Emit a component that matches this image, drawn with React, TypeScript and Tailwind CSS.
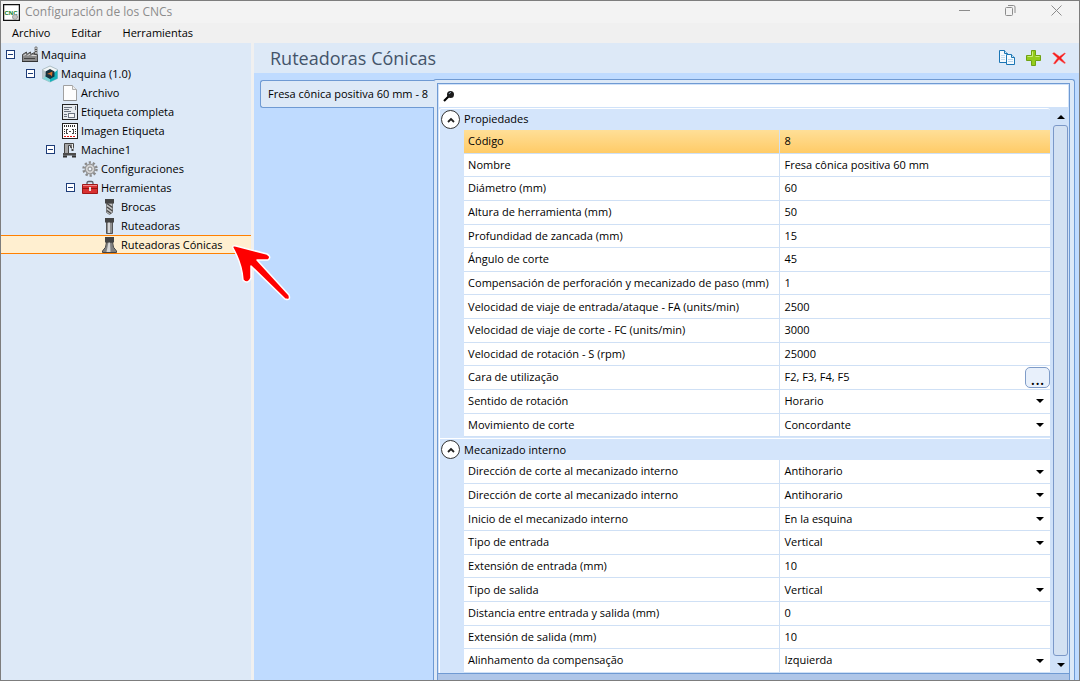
import { useState } from "react";
import type { ReactNode } from "react";

/* ================= TYPES ================= */
interface Field {
  id: string;
  label: string;
  value: string;
  kind?: "text" | "select" | "browse";
}

interface TreeNode {
  id: number;
  name: string;
  icon: ReactNode;
  indent: string;
  expandable?: boolean;
}

/* ================= TREE ICONS ================= */
const FactoryIcon = () => (
  <svg width="18" height="18" viewBox="0 0 18 18">
    <path d="M14 1h2v7h-2z" fill="#e8e8e8" stroke="#666" strokeWidth="0.8" />
    <path d="M14 3.500h2M14 5.500h2" stroke="#555" />
    <path d="M1.500 15.500V8.500L5.500 6v2.500L9.500 6v2.500L13.500 6.500v2h3v7z" fill="#8a8a8a" stroke="#4a4a4a" />
    <path d="M2.500 9.500l3-1.500M6.500 9.500l3-1.500M10.500 9.500h5" stroke="#d8d8d8" />
    <path d="M3 12.500h11" stroke="#444" />
    <path d="M1 15.500h16" stroke="#333" />
  </svg>
);

const CubeIcon = () => (
  <svg width="18" height="18" viewBox="0 0 18 18">
    <path d="M9 1l7.500 3.500v9L9 17l-7.500-3.500v-9z" fill="#f2f6f7" stroke="#9fb4ba" strokeWidth="0.8" />
    <path d="M9 17v-6l7.500-6v8.500z" fill="#16b3bb" />
    <path d="M1.500 13.500L9 17v-4l-5-3z" fill="#7fd6d9" />
    <path d="M1.500 4.500L4 6v6l-2.500 1.500z" fill="#b9c6ca" />
    <path d="M9 4l4.500 2.500v5L9 14l-4.500-2.500v-5z" fill="#17333f" />
    <path d="M6 9l5.500-2.500-.5 5-2-2z" fill="#d9702f" />
  </svg>
);

const FileIcon = () => (
  <svg width="18" height="18" viewBox="0 0 18 18">
    <path d="M2.500 1.500h9l4 4v11h-13z" fill="#fdfdfd" stroke="#a0a0a0" />
    <path d="M11.500 1.500v4h4" fill="#eee" stroke="#b0b0b0" />
    <path d="M2.500 16.500h13" stroke="#8a8a8a" />
  </svg>
);

const LabelIcon = () => (
  <svg width="18" height="18" viewBox="0 0 18 18">
    <rect x="1.500" y="1.500" width="15" height="15" fill="#e6eaee" stroke="#222" />
    <path d="M3 4.500h8M3 6.500h5M3 8.500h7M3 11.500h3M3 13.500h3M14.500 3v4" stroke="#6c7480" />
    <rect x="7.500" y="10.500" width="6" height="4" fill="#f8f8f8" stroke="#6c7480" />
  </svg>
);

const ImageLabelIcon = () => (
  <svg width="18" height="18" viewBox="0 0 18 18">
    <rect x="1.500" y="1.500" width="15" height="15" fill="#fff" stroke="#222" />
    <path d="M3 4h12" stroke="#333" strokeWidth="2" strokeDasharray="1 1" />
    <path d="M3.500 7v5M14.500 7v5" stroke="#333" strokeDasharray="1 1" />
    <path d="M5 7.500h2M11 7.500h2M5 11.500h2M11 11.500h2M5.500 8v3M12.500 8v3M8 9.500h2" stroke="#444" />
    <path d="M3 14.500h12" stroke="#e01818" strokeDasharray="2 1" />
  </svg>
);

const MachineIcon = () => (
  <svg width="18" height="18" viewBox="0 0 18 18">
    <path d="M3.500 13V2.500h9v4h-3v-2h-2V13z" fill="#a5a5a5" stroke="#444" />
    <path d="M11.500 4v6" stroke="#444" strokeWidth="2" />
    <path d="M11.500 3v5" stroke="#eee" />
    <path d="M2 12h13v2.500H2z" fill="#4c4c4c" />
    <path d="M2 15.500h4M11 15.500h4" stroke="#333" strokeWidth="2" />
  </svg>
);

const GearIcon = () => (
  <svg width="18" height="18" viewBox="0 0 18 18">
    <circle cx="9" cy="9" r="6.500" fill="none" stroke="#8a8a8a" strokeWidth="2.500" strokeDasharray="2.200 1.880" />
    <circle cx="9" cy="9" r="4.800" fill="#d4d4d4" stroke="#949494" strokeWidth="1.200" />
    <circle cx="9" cy="9" r="2" fill="#eef3fa" stroke="#8a8a8a" />
  </svg>
);

const ToolboxIcon = () => (
  <svg width="18" height="18" viewBox="0 0 18 18">
    <path d="M6 5V4Q6 2.500 7.500 2.500h3q1.500 0 1.500 1.500v1" fill="none" stroke="#5c6068" strokeWidth="1.300" />
    <path d="M1.500 5.500h15v9h-15z" fill="#d83030" stroke="#a01818" />
    <path d="M2 6.500h14" stroke="#f08a8a" />
    <path d="M1 9.500h16" stroke="#941414" />
    <path d="M8 8h2v4H8z" fill="#e4e4e4" />
  </svg>
);

const DrillIcon = () => (
  <svg width="18" height="18" viewBox="0 0 18 18">
    <path d="M5.500 5h6v9.500l-3 2-3-2z" fill="#c4c4c4" stroke="#666" strokeWidth="0.800" />
    <path d="M6 5.500l5.500 4M6 9l5.500 4M6 12.500l4 3" stroke="#444" strokeWidth="1.300" />
    <path d="M4 1h9v4.500H4z" fill="#444" />
  </svg>
);

const RouterIcon = () => (
  <svg width="18" height="18" viewBox="0 0 18 18">
    <path d="M5.500 5h6v11.500h-6z" fill="#8f8f8f" stroke="#555" />
    <path d="M8 5v11" stroke="#d8d8d8" strokeWidth="2" />
    <path d="M4 1h9v4.500H4z" fill="#444" />
  </svg>
);

const ConeIcon = () => (
  <svg width="18" height="18" viewBox="0 0 18 18">
    <path d="M5.500 6h6q0 6 4 9v1.500h-14V15q4-3 4-9z" fill="#808080" stroke="#444" />
    <path d="M7.500 6h1.500l.5 10h-4z" fill="#d6d6d6" />
    <path d="M4 1h9v5.500H4z" fill="#444" />
  </svg>
);

/* ================= SMALL ICONS ================= */
const AppIcon = () => (
  <svg width="17" height="17" viewBox="0 0 17 17">
    <rect x="0.500" y="0.500" width="16" height="16" fill="#fff" stroke="#111" strokeWidth="1.500" />
    <text x="1.500" y="11" fontSize="6" fontWeight="700" fontFamily="Liberation Sans, sans-serif" fill="#0b7a22">
      CNC
    </text>
    <circle cx="12" cy="13" r="2.500" fill="#c4c4c4" stroke="#999" />
  </svg>
);

const CopyIcon = () => (
  <svg width="18" height="18" viewBox="0 0 18 18">
    <path d="M1.500 1.500h5l3 3v9h-8z" fill="#f4fafe" stroke="#1b76b5" />
    <path d="M6.500 1.500v3h3" fill="#cde4f4" stroke="#1b76b5" />
    <path d="M3 6.500h4M3 8.500h4M3 10.500h4" stroke="#c4dcee" />
    <path d="M8.500 5.500h5l3 3v7h-8z" fill="#f4fafe" stroke="#1b76b5" />
    <path d="M13.500 5.500v3h3" fill="#cde4f4" stroke="#1b76b5" />
    <path d="M10 10.500h5M10 12.500h5" stroke="#b8d4ea" />
  </svg>
);

const AddIcon = () => (
  <svg width="18" height="18" viewBox="0 0 18 18">
    <path d="M7.500 1.500h4v5h5v5h-5v5h-4v-5h-5v-5h5z" fill="#93cc1c" stroke="#6fa214" />
    <path d="M8.500 2.500v5h-5M11.500 7.500h4" fill="none" stroke="#cbec7c" />
  </svg>
);

const DeleteIcon = () => (
  <svg width="18" height="18" viewBox="0 0 18 18">
    <path
      d="M2.500 4.500L4 3.500l5.500 4L14.500 4l1 .5-4.500 4.500 4.500 5-1 .5-5.500-4L5 15l-1.500-.5 4-5.500z"
      fill="#f41c1c"
      stroke="#f66"
      strokeWidth="0.500"
    />
  </svg>
);

const SearchIcon = () => (
  <svg width="12" height="12" viewBox="0 0 12 12">
    <path d="M1 11l4.500-4.500" stroke="#000" strokeWidth="2.200" />
    <circle cx="7.500" cy="4.500" r="3.500" fill="#1c1c1c" />
    <path d="M6 4q.5-1.500 2-1.500" fill="none" stroke="#8fa4b8" />
  </svg>
);

const DownArrow = () => (
  <svg width="8" height="4" viewBox="0 0 8 4">
    <path d="M0 0h8L4 4z" fill="#000" />
  </svg>
);

/* ================= DATA ================= */
const menus = ["Archivo", "Editar", "Herramientas"];

const tree: TreeNode[] = [
  { id: 1, name: "Maquina", icon: <FactoryIcon />, indent: "pl-[5px]", expandable: true },
  { id: 2, name: "Maquina (1.0)", icon: <CubeIcon />, indent: "pl-[25px]", expandable: true },
  { id: 3, name: "Archivo", icon: <FileIcon />, indent: "pl-[60px]" },
  { id: 4, name: "Etiqueta completa", icon: <LabelIcon />, indent: "pl-[60px]" },
  { id: 5, name: "Imagen Etiqueta", icon: <ImageLabelIcon />, indent: "pl-[60px]" },
  { id: 6, name: "Machine1", icon: <MachineIcon />, indent: "pl-[45px]", expandable: true },
  { id: 7, name: "Configuraciones", icon: <GearIcon />, indent: "pl-[80px]" },
  { id: 8, name: "Herramientas", icon: <ToolboxIcon />, indent: "pl-[65px]", expandable: true },
  { id: 9, name: "Brocas", icon: <DrillIcon />, indent: "pl-[100px]" },
  { id: 10, name: "Ruteadoras", icon: <RouterIcon />, indent: "pl-[100px]" },
  { id: 11, name: "Ruteadoras Cónicas", icon: <ConeIcon />, indent: "pl-[100px]" },
];

const properties: Field[] = [
  { id: "codigo", label: "Código", value: "8" },
  { id: "nombre", label: "Nombre", value: "Fresa cônica positiva 60 mm" },
  { id: "diametro", label: "Diámetro (mm)", value: "60" },
  { id: "altura", label: "Altura de herramienta (mm)", value: "50" },
  { id: "profundidad", label: "Profundidad de zancada (mm)", value: "15" },
  { id: "angulo", label: "Ángulo de corte", value: "45" },
  { id: "compensacion", label: "Compensación de perforación y mecanizado de paso (mm)", value: "1" },
  { id: "fa", label: "Velocidad de viaje de entrada/ataque - FA (units/min)", value: "2500" },
  { id: "fc", label: "Velocidad de viaje de corte - FC (units/min)", value: "3000" },
  { id: "rpm", label: "Velocidad de rotación - S (rpm)", value: "25000" },
  { id: "cara", label: "Cara de utilização", value: "F2, F3, F4, F5", kind: "browse" },
  { id: "sentido", label: "Sentido de rotación", value: "Horario", kind: "select" },
  { id: "movimiento", label: "Movimiento de corte", value: "Concordante", kind: "select" },
];

const internal: Field[] = [
  { id: "direccion1", label: "Dirección de corte al mecanizado interno", value: "Antihorario", kind: "select" },
  { id: "direccion2", label: "Dirección de corte al mecanizado interno", value: "Antihorario", kind: "select" },
  { id: "inicio", label: "Inicio de el mecanizado interno", value: "En la esquina", kind: "select" },
  { id: "tipoEntrada", label: "Tipo de entrada", value: "Vertical", kind: "select" },
  { id: "extEntrada", label: "Extensión de entrada (mm)", value: "10" },
  { id: "tipoSalida", label: "Tipo de salida", value: "Vertical", kind: "select" },
  { id: "distancia", label: "Distancia entre entrada y salida (mm)", value: "0" },
  { id: "extSalida", label: "Extensión de salida (mm)", value: "10" },
  { id: "alinhamento", label: "Alinhamento da compensação", value: "Izquierda", kind: "select" },
];

/* ================= PROPERTY GRID ================= */
function FieldRow({ field, active, onFocus }: { field: Field; active: boolean; onFocus: () => void }) {
  const [value, setValue] = useState(field.value);

  return (
    <div
      onFocus={onFocus}
      className={`flex min-h-[22px] flex-1 items-stretch border-b border-[#cfe0f5] ${
        active ? "bg-linear-to-b from-[#ffdf97] to-[#ffcb66]" : "bg-white"
      }`}
    >
      <label htmlFor={field.id} className="flex w-[54%] items-center border-r border-[#cfe0f5] pl-1 whitespace-nowrap">
        {field.label}
      </label>
      <div className="relative flex min-w-0 flex-1 items-center">
        {field.kind === "select" ? (
          <>
            <select
              id={field.id}
              value={value}
              onChange={(e) => setValue(e.target.value)}
              className="w-full appearance-none bg-transparent pl-1 outline-none"
            >
              <option>{field.value}</option>
            </select>
            <span className="pointer-events-none absolute right-[6px]">
              <DownArrow />
            </span>
          </>
        ) : (
          <input
            id={field.id}
            value={value}
            onChange={(e) => setValue(e.target.value)}
            className="w-full min-w-0 bg-transparent pl-1 outline-none"
          />
        )}
        {field.kind === "browse" && (
          <button
            aria-label="Cara de utilização"
            className="flex h-[21px] w-[25px] shrink-0 items-center justify-center rounded-[5px] border border-[#7f9cc8] bg-[#e8f0fb] text-lg"
          >
            ...
          </button>
        )}
      </div>
    </div>
  );
}

function SectionHeader({ title }: { title: string }) {
  return (
    <div className="flex h-[21px] shrink-0 items-center gap-1 bg-[#d4e5fb] pl-px">
      <button
        aria-label={title}
        className="flex size-[19px] items-center justify-center rounded-full border border-[#333] bg-white"
      >
        <svg width="8" height="6" viewBox="0 0 8 6">
          <path d="M1 5l3-3 3 3" fill="none" stroke="#222" strokeWidth="1.800" />
        </svg>
      </button>
      <span>{title}</span>
    </div>
  );
}

/* ================= COMPONENT ================= */
export default function App() {
  const [selected, setSelected] = useState(11);
  const [activeField, setActiveField] = useState("codigo");
  const [search, setSearch] = useState("");

  const renderFields = (fields: Field[]) =>
    fields.map((f) => (
      <FieldRow key={f.id} field={f} active={activeField === f.id} onFocus={() => setActiveField(f.id)} />
    ));

  return (
    <div className="flex h-screen flex-col border border-[#7d7d7d] bg-[#f0f0f0] font-['Open_Sans','Noto_Sans',sans-serif] text-[11px] text-black">
      {/* TITLE BAR */}
      <header className="flex h-[22px] shrink-0 items-center bg-[#f3f3f3] pl-[2px] text-[#8c8c8c]">
        <AppIcon />
        <span className="flex-1 pl-[5px] text-[12px]">Configuración de los CNCs</span>
        <button aria-label="Minimizar" className="flex w-[46px] justify-center pb-1">
          <svg width="11" height="11" viewBox="0 0 11 11">
            <path d="M0 5.500h11" stroke="#8c8c8c" />
          </svg>
        </button>
        <button aria-label="Restaurar" className="flex w-[46px] justify-center pb-1">
          <svg width="11" height="11" viewBox="0 0 11 11" fill="none" stroke="#8c8c8c">
            <rect x="0.500" y="2.500" width="7" height="8" rx="1" />
            <path d="M3 .5h5.500q1.500 0 1.500 1.500v6" />
          </svg>
        </button>
        <button aria-label="Cerrar" className="flex w-[46px] justify-center pb-1">
          <svg width="11" height="11" viewBox="0 0 11 11">
            <path d="M.5.5l10 10M10.500.5l-10 10" stroke="#8c8c8c" />
          </svg>
        </button>
      </header>

      {/* MENU */}
      <nav className="flex h-5 shrink-0 items-center gap-[21px] pl-[11px]">
        {menus.map((m) => (
          <button key={m}>{m}</button>
        ))}
      </nav>

      <div className="flex min-h-0 flex-1">
        {/* TREE */}
        <aside className="mr-[3px] w-[250px] shrink-0 bg-[#dde9f7] pt-[2px]">
          {tree.map((node) => (
            <button
              key={node.id}
              onClick={() => setSelected(node.id)}
              className={`flex h-[19px] w-full items-center border-y whitespace-nowrap ${node.indent} ${
                selected === node.id ? "border-y-[#ff8000] bg-[#ffefd0]" : "border-y-transparent"
              }`}
            >
              {node.expandable && (
                <svg className="mr-[6px]" width="9" height="9" viewBox="0 0 9 9" shapeRendering="crispEdges">
                  <rect x="0.500" y="0.500" width="8" height="8" fill="#fff" stroke="#1d3c78" />
                  <path d="M2 4.500h5" stroke="#1d3c78" />
                </svg>
              )}
              {node.icon}
              <span className="pt-px pl-[2px]">{node.name}</span>
            </button>
          ))}
        </aside>

        {/* MAIN */}
        <main className="flex min-w-0 flex-1 flex-col bg-[#bfdbff]">
          <div className="flex h-[30px] shrink-0 items-center bg-[#dde9f7] pr-[11px] pl-4">
            <h1 className="flex-1 text-[18px] text-[#44546a]">Ruteadoras Cónicas</h1>
            <div className="flex gap-2">
              <button aria-label="Copiar">
                <CopyIcon />
              </button>
              <button aria-label="Agregar">
                <AddIcon />
              </button>
              <button aria-label="Eliminar">
                <DeleteIcon />
              </button>
            </div>
          </div>

          <div className="flex min-h-0 flex-1 items-start pt-[6px] pr-1 pl-[6px]">
            {/* TOOL TABS */}
            <button className="z-10 mt-px -mr-px h-7 shrink-0 rounded-l-[3px] border border-r-0 border-[#6f9ad3] bg-[#dde9f7] pr-[6px] pl-[7px] whitespace-nowrap">
              Fresa cônica positiva 60 mm - 8
            </button>

            <section className="flex h-full min-w-0 flex-1 rounded-t-[3px] border border-b-0 border-[#6f9ad3] bg-[#dde9f7] pt-[3px] pr-1 pl-[3px]">
              <div className="flex min-w-0 flex-1 flex-col border border-b-0 border-[#6f9ad3] bg-[#d0e2f9]">
                <div className="m-px mb-0 flex h-[22px] shrink-0 items-center bg-white pl-1">
                  <label htmlFor="search" aria-label="Buscar">
                    <SearchIcon />
                  </label>
                  <input
                    id="search"
                    value={search}
                    onChange={(e) => setSearch(e.target.value)}
                    className="min-w-0 flex-1 pl-1 outline-none"
                  />
                </div>

                <div className="flex min-h-0 flex-1 pt-px pr-px pl-px">
                  {/* PROPERTIES */}
                  <div className="mr-[3px] flex min-w-0 flex-1 flex-col overflow-y-auto rounded-t-[3px] border-t border-l border-white bg-[#d4e5fb]">
                    <SectionHeader title="Propiedades" />
                    <div className="flex flex-[13] flex-col pl-6">{renderFields(properties)}</div>
                    <div className="mt-px border-t border-white">
                      <SectionHeader title="Mecanizado interno" />
                    </div>
                    <div className="flex flex-[9] flex-col pl-6">{renderFields(internal)}</div>
                  </div>

                  {/* SCROLLBAR */}
                  <div className="flex w-[15px] shrink-0 flex-col items-center">
                    <button aria-label="Subir" className="flex h-[17px] w-full shrink-0 items-center justify-center">
                      <span className="rotate-180">
                        <DownArrow />
                      </span>
                    </button>
                    <div className="w-[15px] flex-1 rounded-[3px] border border-[#7b98c8] bg-[#d3e1f2]" />
                    <button aria-label="Bajar" className="flex h-[17px] w-full shrink-0 items-center justify-center">
                      <DownArrow />
                    </button>
                  </div>
                </div>
                <div className="h-[7px] shrink-0 border-t border-[#6f9ad3] bg-[#afc6e8]" />
              </div>
            </section>
          </div>
        </main>
      </div>

      {/* POINTER */}
      <svg className="pointer-events-none absolute top-[240px] left-[228px] z-20" width="66" height="64" viewBox="0 0 66 64">
        <path
          d="M5 8Q4 5 8 6L39 14Q44 17 40 20L29 20 61 55Q63 61 57 59L23 26 23 38Q20 45 15 40Q14 24 5 8Z"
          fill="#fe0000"
          stroke="#fff"
          strokeWidth="1.500"
          strokeLinejoin="round"
        />
      </svg>
    </div>
  );
}
